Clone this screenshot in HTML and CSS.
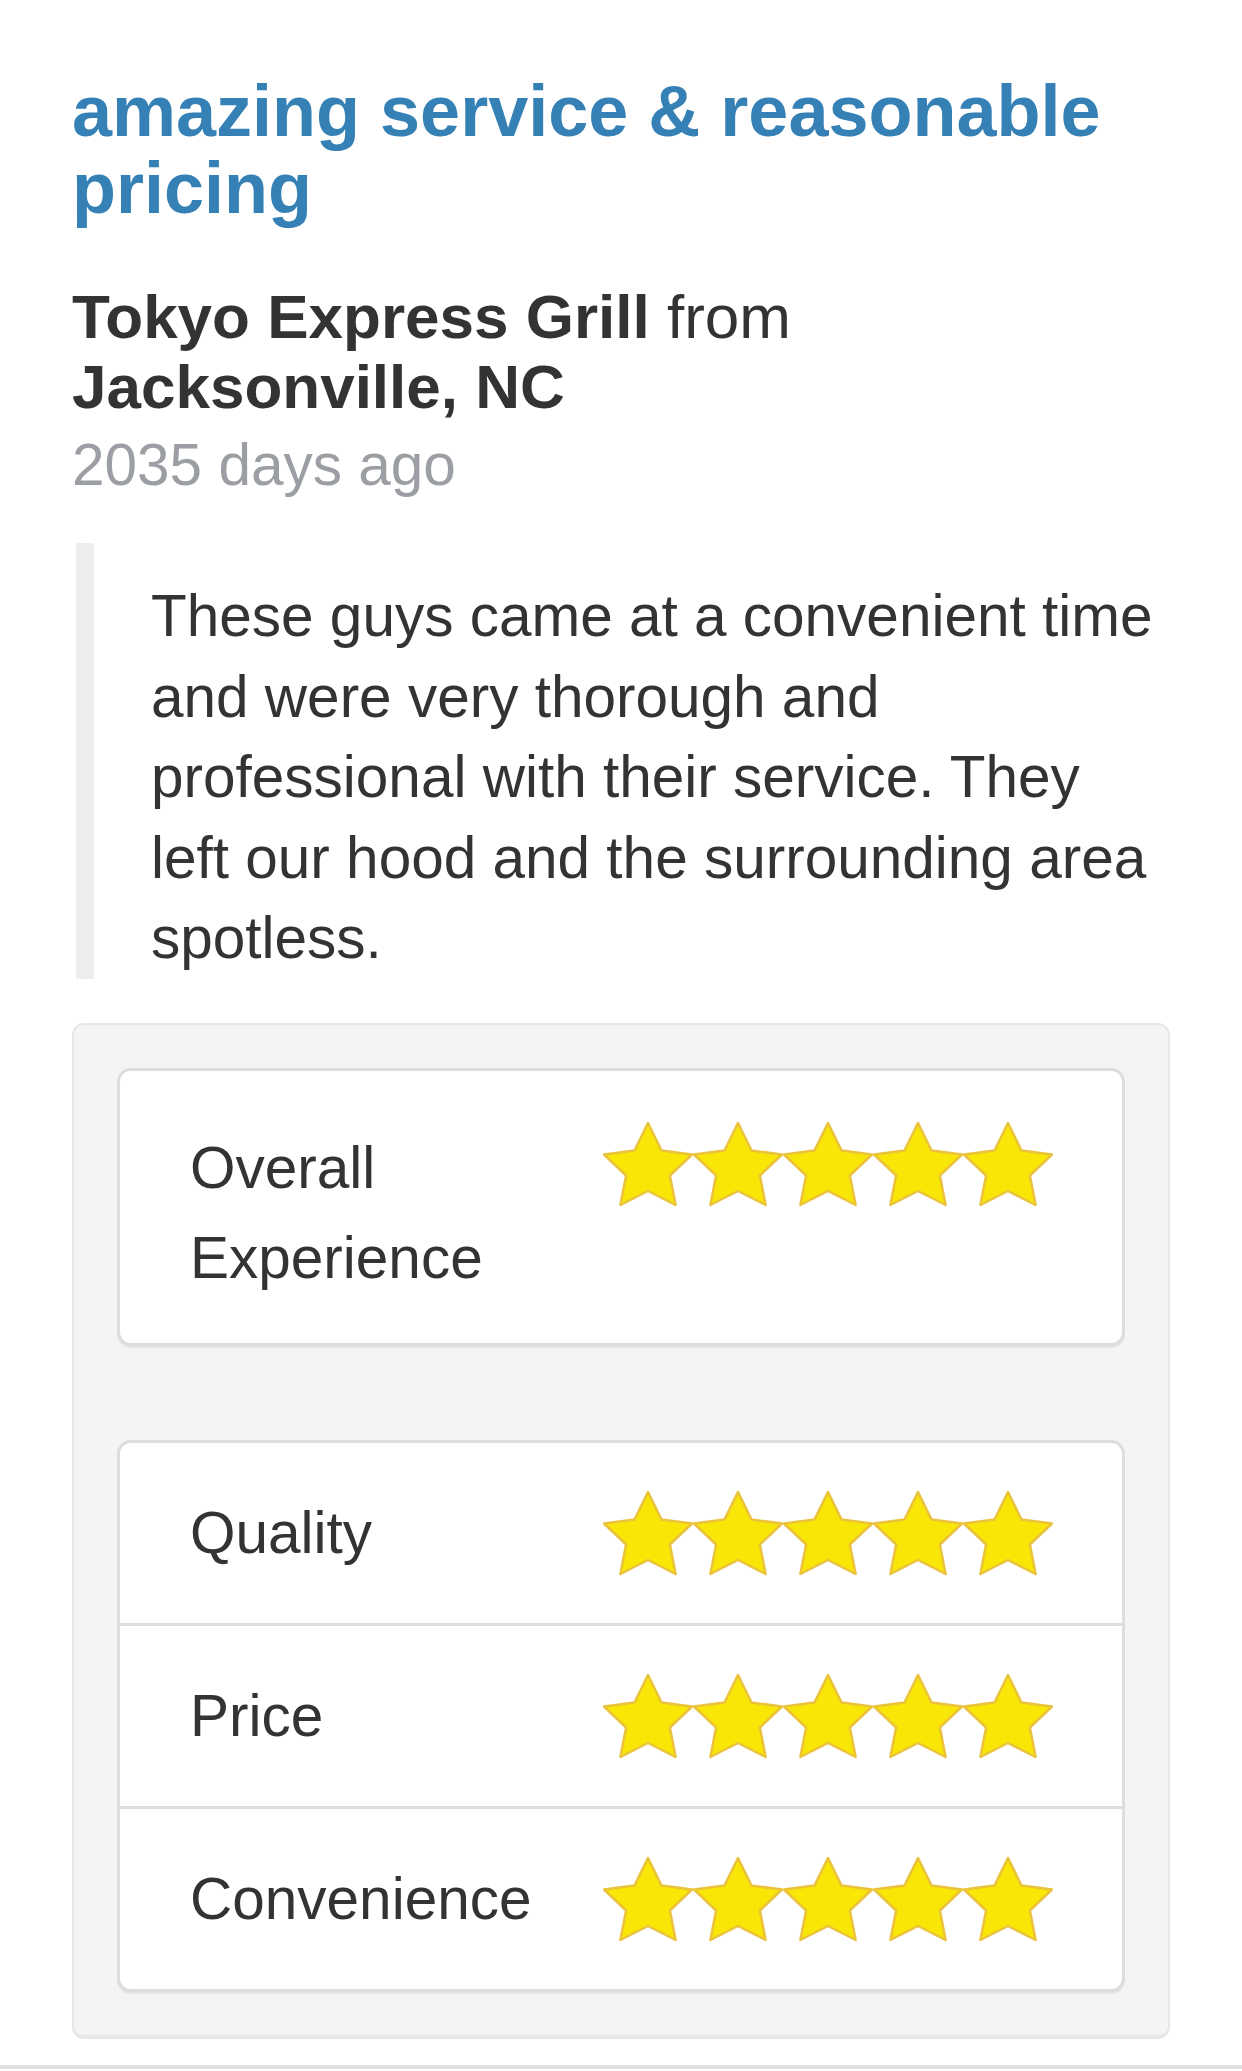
FILE: index.html
```html
<!DOCTYPE html>
<html lang="en">
<head>
<meta charset="utf-8">
<title>Review</title>
<link rel="stylesheet" href="styles.css">
</head>
<body>
<svg class="defs" width="0" height="0" aria-hidden="true">
  <defs>
    <polygon id="star" points="45,2 58.5,29.5 89,33.5 66.9,54.5 72.6,84 45,70 17.4,84 23.1,54.5 1,33.5 31.5,29.5"/>
  </defs>
</svg>
<main class="review">
  <h1 class="review-title">amazing service &amp; reasonable pricing</h1>
  <p class="review-author"><strong>Tokyo Express Grill</strong> from <strong class="review-location">Jacksonville, NC</strong></p>
  <p class="review-date">2035 days ago</p>
  <blockquote class="review-quote">These guys came at a convenient time and were very thorough and professional with their service. They left our hood and the surrounding area spotless.</blockquote>

  <section class="ratings">
    <div class="rating-card rating-card--overall">
      <div class="rating-row rating-row--top">
        <div class="rating-label">Overall Experience</div>
        <svg class="stars" viewBox="0 0 450 86" width="450" height="86" aria-label="5 stars">
          <use href="#star" x="0"/><use href="#star" x="90"/><use href="#star" x="180"/><use href="#star" x="270"/><use href="#star" x="360"/>
        </svg>
      </div>
    </div>

    <div class="rating-card">
      <div class="rating-row">
        <div class="rating-label">Quality</div>
        <svg class="stars" viewBox="0 0 450 86" width="450" height="86" aria-label="5 stars">
          <use href="#star" x="0"/><use href="#star" x="90"/><use href="#star" x="180"/><use href="#star" x="270"/><use href="#star" x="360"/>
        </svg>
      </div>
      <div class="rating-row">
        <div class="rating-label">Price</div>
        <svg class="stars" viewBox="0 0 450 86" width="450" height="86" aria-label="5 stars">
          <use href="#star" x="0"/><use href="#star" x="90"/><use href="#star" x="180"/><use href="#star" x="270"/><use href="#star" x="360"/>
        </svg>
      </div>
      <div class="rating-row">
        <div class="rating-label">Convenience</div>
        <svg class="stars" viewBox="0 0 450 86" width="450" height="86" aria-label="5 stars">
          <use href="#star" x="0"/><use href="#star" x="90"/><use href="#star" x="180"/><use href="#star" x="270"/><use href="#star" x="360"/>
        </svg>
      </div>
    </div>
  </section>
  <div class="divider"></div>
</main>
</body>
</html>
```

FILE: styles.css
```css
html, body {
  margin: 0;
  padding: 0;
  background: #ffffff;
}

body {
  font-family: "Liberation Sans", Arial, Helvetica, sans-serif;
  color: #333333;
}

.defs {
  position: absolute;
  width: 0;
  height: 0;
  overflow: hidden;
}

.review {
  padding: 73px 72px 0 72px;
}

.review-title {
  margin: 0;
  font-size: 72px;
  line-height: 77px;
  font-weight: 700;
  color: #3581b6;
}

.review-author {
  margin: 55px 0 0 0;
  font-size: 62px;
  line-height: 70px;
  color: #333333;
}

.review-author strong {
  font-weight: 700;
}

.review-location {
  display: inline-block;
  white-space: nowrap;
}

.review-date {
  margin: 8px 0 0 0;
  font-size: 58.5px;
  line-height: 70px;
  color: #9b9ea3;
}

.review-quote {
  margin: 43px 0 0 4px;
  padding: 33px 0 0 57px;
  border-left: 18px solid #eeeeee;
  font-size: 58.5px;
  line-height: 80.5px;
  color: #333333;
}

.ratings {
  margin-top: 44px;
  background: #f4f4f4;
  border: 2px solid #e7e7e7;
  border-bottom-width: 4px;
  border-radius: 12px;
  padding: 43px;
  display: flex;
  flex-direction: column;
  gap: 94px;
}

.rating-card {
  background: #ffffff;
  border: 3px solid #dddddd;
  border-radius: 14px;
  box-shadow: 0 2px 0 #e4e4e4;
}

.rating-row {
  display: grid;
  grid-template-columns: 413px 1fr;
  align-items: center;
  padding: 45px 70px;
}

.rating-row + .rating-row {
  border-top: 3px solid #dddddd;
}

.rating-row--top {
  align-items: start;
  padding: 52px 70px 40px 70px;
}

.rating-label {
  font-size: 58.5px;
  line-height: 90px;
  color: #333333;
}

.stars {
  display: block;
  width: 450px;
  height: 86px;
  fill: #f8e606;
  stroke: #eac23c;
  stroke-width: 2.5;
  stroke-linejoin: round;
}

.rating-row--top .stars {
  margin-top: -2px;
}

.divider {
  margin: 26px -72px 0 -72px;
  border-top: 4px solid #e0e0e0;
}
```
